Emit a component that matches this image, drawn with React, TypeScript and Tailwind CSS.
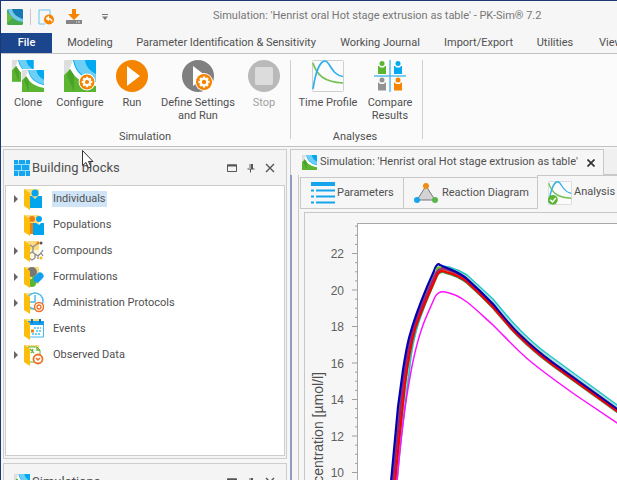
import type { ReactNode } from "react";

const TITLE = "Simulation: 'Henrist oral Hot stage extrusion as table'";

function Gear({ x, y, r = 8 }: { x: number; y: number; r?: number }) {
  return (
    <g transform={`translate(${x} ${y}) scale(${r / 8})`}>
      <circle r="9" fill="#fff" />
      <circle r="8" fill="#f58400" />
      {[0, 45, 90, 135].map((a) => (
        <rect key={a} x="-1.2" y="-5.6" width="2.4" height="11.2" fill="#fff" transform={`rotate(${a})`} />
      ))}
      <circle r="4.2" fill="#fff" />
      <circle r="2.2" fill="#f58400" />
    </g>
  );
}

function SimShape() {
  return (
    <>
      <rect width="32" height="32" rx="1" fill="#00a9f0" />
      <path d="M0 0h9C11 13 20 19 32 22v10H0z" fill="#fff" />
      <path d="M0 0h9L5 10 0 15z" fill="#dedede" />
      <path d="M10 0h11c1 7 5 11 11 14v7C20 18 12 12 10 0z" fill="#6dcff6" />
      <path d="M0 15l6-6c4 9 14 15 26 17v6H0z" fill="#5bb531" />
      <path d="M3 15l3-6 4 6v17z" fill="#49a329" />
    </>
  );
}

function SimIcon({ className }: { className: string }) {
  return (
    <svg viewBox="0 0 32 32" className={className} aria-hidden="true">
      <SimShape />
    </svg>
  );
}

function CloneIcon() {
  return (
    <svg viewBox="0 0 32 32" className="size-8" aria-hidden="true">
      <g transform="scale(.68)"><SimShape /></g>
      <rect x="9" y="9" width="23" height="23" fill="#fbfbfb" />
      <g transform="translate(10 10) scale(.6875)"><SimShape /></g>
    </svg>
  );
}

function ConfigureIcon() {
  return (
    <svg viewBox="0 0 32 32" className="size-8 overflow-visible" aria-hidden="true">
      <SimShape />
      <Gear x={23} y={22} r={7.5} />
    </svg>
  );
}

function RunIcon() {
  return (
    <svg viewBox="0 0 32 32" className="size-8" aria-hidden="true">
      <circle cx="16" cy="16" r="16" fill="#f58400" />
      <path d="M11 6l13 10-13 10z" fill="#fff" />
    </svg>
  );
}

function DefineIcon() {
  return (
    <svg viewBox="0 0 32 32" className="size-8 overflow-visible" aria-hidden="true">
      <circle cx="16" cy="16" r="16" fill="#808080" />
      <path d="M11 6l13 10-13 10z" fill="#fff" />
      <Gear x={22} y={22} r={8} />
    </svg>
  );
}

function StopIcon() {
  return (
    <svg viewBox="0 0 32 32" className="size-8" aria-hidden="true">
      <circle cx="16" cy="16" r="16" fill="#b9b9b9" />
      <rect x="7" y="7" width="18" height="18" rx="2" fill="#dcdcdc" />
    </svg>
  );
}

function ProfileIcon({ className, checked }: { className: string; checked?: boolean }) {
  return (
    <svg viewBox="0 0 32 32" className={className} aria-hidden="true">
      <rect x=".5" y=".5" width="31" height="31" rx="1" fill="#fbfbfb" stroke="#cfcfcf" />
      <path d="M1 3c4 13 12 19 30 20" fill="none" stroke="#74bf52" strokeWidth="1.7" />
      <path d="M1 29C4 9 9 1 13 1c5 0 6 14 18 15.500" fill="none" stroke="#2cb0ee" strokeWidth="1.7" />
      {checked && (
        <>
          <circle cx="6.500" cy="25" r="6.500" fill="#5bb531" />
          <path d="M3 25l3 3 4.500-5.500" fill="none" stroke="#fff" strokeWidth="2" />
        </>
      )}
    </svg>
  );
}

function Figure({ x, y, fill }: { x: number; y: number; fill: string }) {
  return (
    <g fill={fill} transform={`translate(${x} ${y})`}>
      <circle cx="4" cy="2.500" r="2.500" />
      <path d="M0 5h1l1 1.500h4L7 5h1v8H0z" />
    </g>
  );
}

function CompareIcon() {
  return (
    <svg viewBox="0 0 32 32" className="size-8" aria-hidden="true">
      <path d="M16 0v32M0 16h32" stroke="#55bdf0" strokeWidth="1.500" />
      <Figure x={4} y={1} fill="#5bb531" />
      <Figure x={20} y={1} fill="#00a9f0" />
      <Figure x={4} y={17.500} fill="#939393" />
      <Figure x={20} y={17.500} fill="#f58400" />
    </svg>
  );
}

function RibbonButton({ icon, width, children, disabled }: { icon: ReactNode; width: string; children: ReactNode; disabled?: boolean }) {
  return (
    <button
      type="button"
      disabled={disabled}
      className={`flex shrink-0 flex-col items-center gap-1 text-center leading-[13px] whitespace-nowrap disabled:text-[#a0a0a0] ${width}`}
    >
      {icon}
      <span>{children}</span>
    </button>
  );
}

function Ribbon() {
  return (
    <section aria-label="Modeling" className="flex h-[93px] shrink-0 border-b border-[#c2c2c2] bg-[#fbfbfb] pt-1.5 pb-[7px]">
      <div className="flex w-[290px] shrink-0 flex-col justify-between border-r border-[#cfcfcf] pl-[7px]">
        <div className="flex items-start">
          <RibbonButton width="w-10" icon={<CloneIcon />}>Clone</RibbonButton>
          <RibbonButton width="w-16" icon={<ConfigureIcon />}>Configure</RibbonButton>
          <RibbonButton width="w-10" icon={<RunIcon />}>Run</RibbonButton>
          <RibbonButton width="w-[92px]" icon={<DefineIcon />}>Define Settings<br />and Run</RibbonButton>
          <RibbonButton width="w-10" icon={<StopIcon />} disabled>Stop</RibbonButton>
        </div>
        <h2 className="pr-2 text-center leading-1">Simulation</h2>
      </div>
      <div className="flex w-[132px] shrink-0 flex-col justify-between border-r border-[#cfcfcf] pl-[5px]">
        <div className="flex items-start">
          <RibbonButton width="w-16" icon={<ProfileIcon className="size-8" />}>Time Profile</RibbonButton>
          <RibbonButton width="w-[60px]" icon={<CompareIcon />}>Compare<br />Results</RibbonButton>
        </div>
        <h2 className="pr-2 text-center leading-1">Analyses</h2>
      </div>
    </section>
  );
}

function TitleBar() {
  return (
    <header className="flex h-[31px] shrink-0 items-center pl-1.5">
      <button type="button" aria-label="PK-Sim menu">
        <svg viewBox="0 0 16 16" className="size-4" aria-hidden="true">
          <rect width="16" height="16" rx="1.500" fill="#43a94b" />
          <path d="M1 1c1 6 6 10 15 12V1.500A1.500 1.500 0 0 0 14.500 0H2z" fill="#1679b4" />
          <path d="M1 0h4c1 5 5 8 11 10v3C7 12 2 7 1 0z" fill="#72c8e8" />
          <path d="M0 3l6 6-6 5z" fill="#6dbb45" />
        </svg>
      </button>
      <span className="mx-[7px] h-4 w-px bg-[#c8c8c8]" />
      <button type="button" aria-label="Undo change">
        <svg viewBox="0 0 16 16" className="size-4" aria-hidden="true">
          <path d="M1 1h11v3M7 15H1V1" fill="none" stroke="#68c5f2" />
          <path d="M12 4v3" stroke="#68c5f2" />
          <circle cx="11" cy="10.500" r="5" fill="#f58400" />
          <path d="M14 12.500c0-2-1-3-4-3M10.500 7.500l-2.500 2 2.500 2z" fill="#fff" stroke="#fff" />
        </svg>
      </button>
      <button type="button" aria-label="Save" className="ml-3">
        <svg viewBox="0 0 16 16" className="size-4" aria-hidden="true">
          <path d="M6 0h4v5h4l-6 6-6-6h4z" fill="#f58400" />
          <path d="M0 11h16v4H0z" fill="#858585" />
          <path d="M10 13h1M12 13h2" stroke="#ddd" />
        </svg>
      </button>
      <button type="button" aria-label="Customize toolbar" className="ml-5">
        <svg viewBox="0 0 6 6" className="size-1.5" aria-hidden="true">
          <path d="M0 .5h6" stroke="#777" />
          <path d="M0 2.500h6L3 6z" fill="#777" />
        </svg>
      </button>
      <h1 className="ml-[105px] whitespace-nowrap text-[#767676]">{TITLE} - PK-Sim® 7.2</h1>
    </header>
  );
}

function Menu() {
  return (
    <nav className="flex h-[22px] shrink-0 border-b border-[#c2c2c2] pt-px whitespace-nowrap">
      <button type="button" className="h-5 w-[51px] shrink-0 bg-[#1b458c] font-medium text-white">File</button>
      <button type="button" className="w-[76px] shrink-0">Modeling</button>
      <button type="button" className="w-[196px] shrink-0">Parameter Identification &amp; Sensitivity</button>
      <button type="button" className="w-28 shrink-0">Working Journal</button>
      <button type="button" className="w-[85px] shrink-0">Import/Export</button>
      <button type="button" className="w-[68px] shrink-0">Utilities</button>
      <button type="button" className="w-11 shrink-0">View</button>
    </nav>
  );
}

function PanelButtons() {
  return (
    <div className="ml-auto flex items-center gap-[9px] text-[#555]">
      <button type="button" aria-label="Maximize">
        <svg viewBox="0 0 10 10" className="size-2.5" aria-hidden="true">
          <path d="M.5 2h9v6.500h-9z" fill="none" stroke="currentColor" />
          <path d="M0 2.500h10" stroke="currentColor" strokeWidth="2" />
        </svg>
      </button>
      <button type="button" aria-label="Pin">
        <svg viewBox="0 0 10 10" className="size-2.5" aria-hidden="true">
          <path d="M3 1.500h4M1.500 6h7M4.500 6v3.500" stroke="currentColor" />
          <path d="M3 1h2v5H3z" fill="#aaa" />
          <path d="M5 1h2v5H5z" fill="currentColor" />
        </svg>
      </button>
      <button type="button" aria-label="Close">
        <svg viewBox="0 0 10 10" className="size-2.5" aria-hidden="true">
          <path d="M1 1l8 8M9 1L1 9" stroke="currentColor" strokeWidth="1.400" />
        </svg>
      </button>
    </div>
  );
}

function Panel({ title, icon, children }: { title: string; icon: ReactNode; children?: ReactNode }) {
  return (
    <section className="shrink-0 border border-[#cdcdcd] bg-[#f4f4f4] px-px pb-0.5">
      <div className="flex h-[35px] items-center gap-0.5 pr-2.5 pl-[9px]">
        {icon}
        <h2 className="text-[13px] leading-5">{title}</h2>
        <PanelButtons />
      </div>
      {children}
    </section>
  );
}

function Folder({ children }: { children?: ReactNode }) {
  return (
    <svg viewBox="0 0 20 22" className="h-[22px] w-5 shrink-0" aria-hidden="true">
      <path d="M0 1h15v17H0z" fill="#ffdc7a" />
      {children}
      <path d="M0 1l6 4v17l-6-4z" fill="#fdbd0b" />
    </svg>
  );
}

const BLOCKS: { name: string; expandable: boolean; art: ReactNode }[] = [
  {
    name: "Individuals", expandable: true,
    art: <g fill="#00a5ee"><circle cx="11" cy="5" r="3.500" /><path d="M5 8h3l3 3 3-3h4v12H5z" /></g>,
  },
  {
    name: "Populations", expandable: false,
    art: (
      <>
        <circle cx="8" cy="5" r="3" fill="#f07f13" /><path d="M5 9h5v11H5z" fill="#f07f13" />
        <circle cx="15" cy="5" r="3" fill="#00a5ee" /><path d="M9 9h3l3 2 2-2h3v12H9z" fill="#00a5ee" />
      </>
    ),
  },
  {
    name: "Compounds", expandable: true,
    art: (
      <>
        <path d="M6 10h13v10H6z" fill="#fff" opacity=".75" />
        <g fill="none" stroke="#8c8c8c" strokeWidth="1.300">
          <path d="M8 12l3 2v4l-3 2-3-2v-4zM11 14l3 2 3-3M9 12V7L6 5M9 7l4-3M17 13l2-3M14 16v3M17 13l2 3" />
        </g>
        <circle cx="14" cy="3" r="1.500" fill="#f07f13" /><circle cx="17" cy="3" r="1.500" fill="#555" />
        <circle cx="17" cy="18" r="1.500" fill="#fdbd0b" />
      </>
    ),
  },
  {
    name: "Formulations", expandable: true,
    art: (
      <>
        <circle cx="8" cy="6" r="5" fill="#777" />
        <circle cx="11" cy="13" r="3" fill="#5bb531" /><circle cx="8" cy="17" r="4" fill="#5bb531" />
        <path d="M13 13l3-3" stroke="#139fee" strokeWidth="7" strokeLinecap="round" />
      </>
    ),
  },
  {
    name: "Administration Protocols", expandable: true,
    art: (
      <>
        <circle cx="11" cy="9" r="8" fill="#fff" stroke="#49b9ef" strokeWidth="1.500" />
        <path d="M11 3v7H6" fill="none" stroke="#49b9ef" strokeWidth="1.500" />
        <circle cx="15" cy="15" r="4.500" fill="#fff" stroke="#f06f24" strokeWidth="1.500" />
        <circle cx="15" cy="15" r="2" fill="none" stroke="#f06f24" strokeWidth="1.300" />
      </>
    ),
  },
  {
    name: "Events", expandable: false,
    art: (
      <>
        <path d="M4 4h15.500v15H4z" fill="#fff" stroke="#49b9ef" /><path d="M4 3h16v4H4z" fill="#139fee" />
        <path d="M8 1v4M16 1v4" stroke="#0878bd" strokeWidth="2" />
        <path d="M10 10h7M12 13h5M8 16h9" stroke="#6dcff6" strokeWidth="2" strokeDasharray="2 1" />
        <path d="M7 13h3" stroke="#f07f13" strokeWidth="3" />
      </>
    ),
  },
  {
    name: "Observed Data", expandable: true,
    art: (
      <>
        <path d="M4 3h9l3 3v12H4z" fill="#fff" stroke="#5bb531" />
        <path d="M6 5l4 4M9 5L7 9M13 3v3h3" fill="none" stroke="#5bb531" strokeWidth="1.300" />
        <circle cx="14" cy="15" r="4.500" fill="#fff" stroke="#f06f24" strokeWidth="1.800" />
        <path d="M12 14l2 2 2-2" fill="none" stroke="#f06f24" strokeWidth="1.500" />
      </>
    ),
  },
];

function BlockTree() {
  return (
    <ul className="h-[271px] border border-[#cdcdcd] bg-white">
      {BLOCKS.map((b, i) => (
        <li key={b.name} className="flex h-[26px] items-center pl-2">
          <span className="w-2.5 shrink-0">
            {b.expandable && (
              <svg viewBox="0 0 4 8" className="h-2 w-1" aria-hidden="true">
                <path d="M0 0l4 4-4 4z" fill="#666" />
              </svg>
            )}
          </span>
          <Folder>{b.art}</Folder>
          <button type="button" className={`ml-2 px-px leading-4 ${i === 0 ? "bg-[#cfe5f7]" : ""}`}>{b.name}</button>
        </li>
      ))}
    </ul>
  );
}

function BricksIcon() {
  return (
    <svg viewBox="0 0 16 16" className="size-4" aria-hidden="true">
      <rect y="1" width="16" height="14" fill="#9bdcf8" />
      <g fill="#15a5ee">
        <path d="M0 0h4v4H0zM5 0h6v4H5zM12 0h4v4h-4zM0 5h7v5H0zM8 5h7v5H8zM0 11h4v5H0zM5 11h6v5H5zM12 11h4v5h-4z" />
      </g>
    </svg>
  );
}

const MAIN = "M391 482C393 462 395 440 398 407L403 370C405 357 407 346 409 338C413 323 419 306 427 287L434 271Q437 262 440 265L447 268C454 271 462 274 467 279L480 291 493 304C502 315 511 327 520 335C530 345 541 354 553 363L617 409 700 468";
const INNER = "M393 482C396 450 400 411 403 384C406 361 410 340 414 327C419 312 424 301 430 287L436 274Q440 266 446 269C454 271 462 276 467 280L493 306C502 317 511 328 520 336C530 346 541 355 553 364L617 410 700 469";
const RED = "M395 482C398 450 402 411 405 384C408 361 412 340 415 329C420 314 425 303 431 289L437 275Q440 269 446 272C454 274 462 278 467 282L480 294 493 307C502 317 511 329 520 337C530 347 541 356 553 365L617 411 700 470";
const CYAN = "M397 482C400 445 406 397 409 374C411 350 415 332 420 318L437 272Q440 265 449 267C456 269 462 272 467 275L493 299C502 310 511 321 520 330C530 340 541 350 553 358L617 405 700 465";
const MAGENTA = "M397 482C400 447 405 404 410 377C414 354 420 331 427 315L435 297Q438 291 445 292C452 293 460 297 467 302C476 309 485 318 493 325C508 340 518 351 530 361C542 371 560 384 577 396L617 423 700 480";

function Chart() {
  const y = (v: number) => 253.5 + (22 - v) * 18.25;
  const minor: number[] = [];
  for (let v = 23.5; v >= 6; v -= 0.5) minor.push(v);
  return (
    <svg viewBox="305 213 480 300" className="h-[300px] w-[480px] max-w-none font-['Liberation_Sans',sans-serif]" role="img" aria-label="Concentration over time">
      <rect x="357.500" y="223.500" width="500" height="400" fill="#fff" stroke="#a8a8a8" />
      {minor.map((v) => (
        <path key={v} d={`M${v % 2 === 0 ? 352 : 355} ${y(v)}H357`} stroke="#a0a0a0" />
      ))}
      {[22, 20, 18, 16, 14, 12, 10].map((v) => (
        <text key={v} x="344" y={y(v) + 4.5} fontSize="12" textAnchor="end" fill="#606060">{v}</text>
      ))}
      <text transform="translate(323 372) rotate(-90)" fontSize="14" textAnchor="end" fill="#505050">Concentration [µmol/l]</text>
      <g fill="none" strokeLinejoin="round">
        <path d={CYAN} stroke="#a9dde4" strokeWidth="3" transform="translate(-1 2)" />
        <path d={CYAN} stroke="#20c4c4" strokeWidth="1.500" />
        <path d={RED} stroke="#3c8a3c" strokeWidth="2" transform="translate(0 1)" />
        <path d={INNER} stroke="#9a7040" strokeWidth="4" />
        <path d={INNER} stroke="#a02080" strokeWidth="2" />
        <path d={RED} stroke="#f80000" strokeWidth="2" />
        <path d={MAIN} stroke="#0000b4" strokeWidth="2.200" />
        <path d="M436 270q2-4 5-2" stroke="#66c020" strokeWidth="2" />
        <path d="M480 294L493 307C502 317 511 329 520 337C530 347 541 356 553 365L617 411" stroke="#e80010" strokeWidth="1.600" />
        <path d={MAGENTA} stroke="#ff10ff" strokeWidth="1.500" />
      </g>
    </svg>
  );
}

function Workspace() {
  return (
    <main className="flex min-w-0 flex-1 flex-col overflow-hidden pt-0.5">
      <div className="flex h-[26px] shrink-0 bg-[#f0f0f0]">
        <div className="flex w-[314px] shrink-0 items-center border-x border-t border-[#c8c8c8] bg-[#f6f6f6] pr-2 pl-[11px]">
          <SimIcon className="size-[15px] shrink-0" />
          <span className="ml-[3px] whitespace-nowrap">{TITLE}</span>
          <button type="button" aria-label="Close tab" className="ml-auto">
            <svg viewBox="0 0 8 8" className="size-2" aria-hidden="true">
              <path d="M.5 .5l7 7M7.500 .5l-7 7" stroke="#333" strokeWidth="1.700" />
            </svg>
          </button>
        </div>
        <div className="flex-1 border-b border-[#c8c8c8]" />
      </div>
      <div className="flex min-h-0 flex-1 flex-col border-l-2 border-[#8d9cbd] bg-[#f6f6f6] pl-1.5">
        <div className="flex h-[34px] shrink-0 items-end border-l border-[#c8c8c8] pl-px whitespace-nowrap">
          <button type="button" className="flex h-8 w-[104px] shrink-0 items-center border border-[#c8c8c8] pl-2.5">
            <svg viewBox="0 0 24 22" className="h-[22px] w-6" aria-hidden="true">
              <path d="M0 2h24" stroke="#15a5ee" strokeWidth="4" />
              <path d="M0 8.500h3M5 8.500h19M0 14.500h3M5 14.500h19M0 20.500h3M5 20.500h19" stroke="#15a5ee" strokeWidth="2" />
            </svg>
            <span className="ml-0.5">Parameters</span>
          </button>
          <button type="button" className="flex h-8 w-[133px] shrink-0 items-center border-y border-[#c8c8c8] pl-2.5">
            <svg viewBox="0 0 24 20" className="h-5 w-6" aria-hidden="true">
              <path d="M12 3l9 14H3z" fill="#d3d3d3" stroke="#777" />
              <circle cx="12" cy="3" r="3" fill="#ed8e16" />
              <circle cx="3" cy="17" r="3" fill="#15a5ee" />
              <circle cx="21" cy="17" r="3" fill="#5bb54b" />
            </svg>
            <span className="ml-1">Reaction Diagram</span>
          </button>
          <button type="button" className="flex h-[34px] w-40 shrink-0 items-center border-t border-l border-[#c8c8c8] pl-2.5">
            <ProfileIcon className="size-6" checked />
            <span className="ml-0.5">Analysis</span>
          </button>
        </div>
        <div className="min-h-0 flex-1 overflow-hidden border-l border-[#c8c8c8] pt-[3px] pl-[5px]">
          <div className="border-t border-l border-[#c8c8c8]">
            <Chart />
          </div>
        </div>
      </div>
    </main>
  );
}

export default function App() {
  return (
    <div className="relative flex h-screen flex-col overflow-hidden border-t border-l border-[#1b3a73] bg-[#f6f6f6] font-['Roboto',sans-serif] text-[11px] text-[#505050]">
      <TitleBar />
      <Menu />
      <Ribbon />
      <div className="flex min-h-0 flex-1">
        <aside className="flex w-[289px] shrink-0 flex-col gap-1 overflow-hidden pt-0.5 pr-[3px] pl-0.5">
          <Panel title="Building blocks" icon={<BricksIcon />}>
            <BlockTree />
          </Panel>
          <Panel title="Simulations" icon={<SimIcon className="size-4" />} />
        </aside>
        <Workspace />
      </div>
      <svg viewBox="0 0 12 19" className="pointer-events-none absolute top-[149px] left-[81px] h-[19px] w-3" aria-hidden="true">
        <path d="M.5 .5v15l3.500-3 2.500 5.500 2.500-1-2.500-5.500H11z" fill="#fff" stroke="#333" />
      </svg>
    </div>
  );
}
